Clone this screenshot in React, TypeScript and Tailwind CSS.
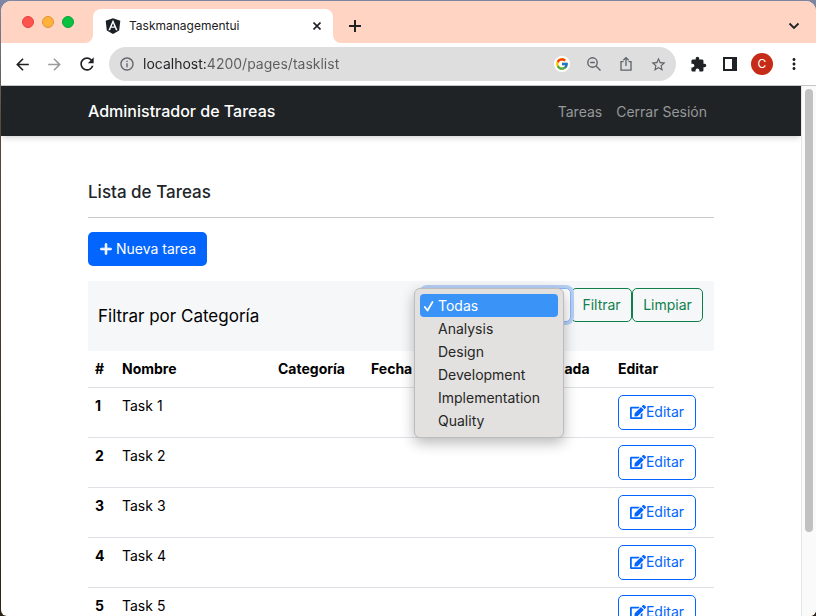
import { useState } from "react";
import { FaAngular, FaEdit } from "react-icons/fa";
import { FaPlus } from "react-icons/fa6";
import { FcGoogle } from "react-icons/fc";
import {
  MdArrowBack,
  MdArrowForward,
  MdExtension,
  MdInfoOutline,
  MdMoreVert,
  MdRefresh,
  MdStarBorder,
} from "react-icons/md";

const categories = ["Todas", "Analysis", "Design", "Development", "Implementation", "Quality"];
const tasks = ["Task 1", "Task 2", "Task 3", "Task 4", "Task 5"];

function TabStrip() {
  return (
    <div className="flex h-[42px] shrink-0 items-end bg-[#ffd4c3] pr-3">
      <div className="flex h-full w-[92px] items-center gap-2 pl-[21px]">
        <button aria-label="Cerrar ventana" className="size-3 rounded-full border border-[#e5403f] bg-[#ff5350]" />
        <button aria-label="Minimizar ventana" className="size-3 rounded-full border border-[#e0942c] bg-[#ffb13c]" />
        <button aria-label="Maximizar ventana" className="size-3 rounded-full border border-[#05a336] bg-[#07c140]" />
      </div>
      <div className="relative flex h-[34px] w-60 items-center rounded-t-lg bg-white pl-[11px] pr-3">
        <svg className="absolute bottom-0 -left-2 size-2 text-white" viewBox="0 0 8 8" aria-hidden="true">
          <path d="M8 0v8H0a8 8 0 0 0 8-8z" fill="currentColor" />
        </svg>
        <svg className="absolute bottom-0 -right-2 size-2 text-white" viewBox="0 0 8 8" aria-hidden="true">
          <path d="M0 0v8h8a8 8 0 0 1-8-8z" fill="currentColor" />
        </svg>
        <FaAngular className="size-[18px] text-[#1b1f26]" />
        <span className="ml-[7px] flex-1 text-xs text-[#202124]">Taskmanagementui</span>
        <button aria-label="Cerrar pestaña" className="text-[#202124]">
          <svg className="size-2" viewBox="0 0 8 8" fill="none" stroke="currentColor" strokeWidth="1.600" aria-hidden="true">
            <path d="M.5.5l7 7M7.500.5l-7 7" />
          </svg>
        </button>
      </div>
      <button aria-label="Nueva pestaña" className="mb-[10px] ml-[15px] text-[#202124]">
        <svg className="size-[14px]" viewBox="0 0 14 14" fill="none" stroke="currentColor" strokeWidth="2" aria-hidden="true">
          <path d="M7 1v12M1 7h12" />
        </svg>
      </button>
      <button aria-label="Buscar pestañas" className="mb-[11px] ml-auto mr-1 text-[#202124]">
        <svg className="size-3" viewBox="0 0 12 12" fill="none" stroke="currentColor" strokeWidth="1.8" aria-hidden="true">
          <path d="M1.5 3.5L6 8l4.500-4.500" />
        </svg>
      </button>
    </div>
  );
}

function Toolbar() {
  const [url, setUrl] = useState("localhost:4200/pages/tasklist");
  return (
    <div className="flex h-[43px] shrink-0 items-center border-b border-[#c4c6c8] bg-white px-3 text-[#202124]">
      <div className="flex w-24 items-center gap-[13px]">
        <button aria-label="Atrás"><MdArrowBack className="size-[19px]" /></button>
        <button aria-label="Adelante" className="text-[#9b9b9b]"><MdArrowForward className="size-[19px]" /></button>
        <button aria-label="Recargar"><MdRefresh className="size-5" /></button>
      </div>
      <div className="flex h-[34px] flex-1 items-center rounded-full bg-[#dedede] pl-[10px] pr-[9px] text-[#5f6368]">
        <MdInfoOutline className="size-4 shrink-0" />
        <input
          aria-label="Dirección"
          value={url}
          onChange={(e) => setUrl(e.target.value)}
          className="ml-2 min-w-0 flex-1 bg-[linear-gradient(90deg,#202124_64px,#5b5c5e_64px)] bg-clip-text text-sm text-transparent outline-none"
        />
        <span className="flex size-4 items-center justify-center rounded-full bg-white">
          <FcGoogle className="size-[14px]" />
        </span>
        <div className="ml-4 flex items-center gap-4">
          <button aria-label="Zoom">
            <svg className="size-4" viewBox="0 0 16 16" fill="none" stroke="currentColor" strokeWidth="1.4" aria-hidden="true">
              <circle cx="6.500" cy="6.500" r="4.700" />
              <path d="M10 10l4.500 4.500M4.200 6.500h4.600" />
            </svg>
          </button>
          <button aria-label="Compartir">
            <svg className="size-4" viewBox="0 0 16 16" fill="none" stroke="currentColor" strokeWidth="1.3" aria-hidden="true">
              <path d="M5.500 5.700H3v8.500h10V5.700h-2.500M8 10V1.800M5.300 4.300L8 1.600l2.700 2.700" />
            </svg>
          </button>
          <button aria-label="Añadir a marcadores"><MdStarBorder className="size-[17px]" /></button>
        </div>
      </div>
      <div className="ml-[14px] flex items-center pr-px">
        <button aria-label="Extensiones"><MdExtension className="size-[17px]" /></button>
        <button aria-label="Panel lateral" className="ml-4">
          <svg className="size-[14px]" viewBox="0 0 14 14" aria-hidden="true">
            <path d="M0 0h14v14H0zM2 2v10h7V2z" fill="currentColor" fillRule="evenodd" />
          </svg>
        </button>
        <button aria-label="Perfil" className="ml-[14px] size-[22px] rounded-full bg-[#c52b17] text-xs text-white">C</button>
        <button aria-label="Menú" className="ml-3"><MdMoreVert className="size-[18px]" /></button>
      </div>
    </div>
  );
}

function Navbar() {
  return (
    <nav className="bg-[#1f2326] shadow-md">
      <div className="mx-auto flex h-[50px] max-w-[626px] items-baseline pt-[13px]">
        <a href="#inicio" className="text-base font-medium text-white">Administrador de Tareas</a>
        <div className="ml-auto flex gap-[14px] pr-[7px] text-sm text-[#969899]">
          <a href="#tareas">Tareas</a>
          <a href="#salir">Cerrar Sesión</a>
        </div>
      </div>
    </nav>
  );
}

function CategorySelect() {
  const [selected, setSelected] = useState("Todas");
  return (
    <div className="relative w-[149px]">
      <select
        id="categoria"
        value={selected}
        onChange={(e) => setSelected(e.target.value)}
        className="h-[34px] w-full appearance-none rounded-[5px] border border-[#86b7fe] bg-white pl-[15px] text-sm outline-none ring-3 ring-[#b5cff5]"
      >
        {categories.map((c) => (
          <option key={c}>{c}</option>
        ))}
      </select>
      <ul
        role="listbox"
        aria-label="Categorías"
        className="absolute top-0 -left-2 z-10 w-[150px] rounded-md border border-[#bcbcbc] bg-[#e2e1df] p-[5px] text-sm text-[#262626] shadow-[0_5px_14px_rgba(0,0,0,0.28)]"
      >
        {categories.map((c) => (
          <li
            key={c}
            role="option"
            aria-selected={c === selected}
            onClick={() => setSelected(c)}
            className="flex h-[23px] items-center rounded-sm pl-[3px] aria-selected:bg-[#3a94f8] aria-selected:text-white"
          >
            <span className="w-[15px]">
              {c === selected && (
                <svg className="size-3" viewBox="0 0 12 12" fill="none" stroke="currentColor" strokeWidth="1.700" strokeLinecap="round" strokeLinejoin="round" aria-hidden="true">
                  <path d="M1.800 7l2.700 3.500L9.500 2" />
                </svg>
              )}
            </span>
            {c}
          </li>
        ))}
      </ul>
    </div>
  );
}

function FilterBar() {
  return (
    <form className="flex h-[70px] items-start bg-[#f6f7f9] pt-[7px] pr-[11px] pl-[10px]" onSubmit={(e) => e.preventDefault()}>
      <label htmlFor="categoria" className="mr-auto pt-4 text-[17px] leading-6 text-black">Filtrar por Categoría</label>
      <CategorySelect />
      <button className="h-[34px] w-[61px] rounded-[5px] border border-[#107f4c] text-sm text-[#107f4c]">Filtrar</button>
      <button type="button" className="h-[34px] w-[71px] rounded-[5px] border border-[#107f4c] text-sm text-[#107f4c]">Limpiar</button>
    </form>
  );
}

function TaskTable() {
  return (
    <table className="w-full table-fixed text-left text-sm text-black">
      <thead>
        <tr className="h-9 border-b border-[#dee2e6]">
          <th className="w-[27px] px-[7px]">#</th>
          <th className="w-[156px] px-[7px]">Nombre</th>
          <th className="w-[93px] px-[7px]">Categoría</th>
          <th className="px-[7px]">Fecha</th>
          <th className="w-[98px] px-[7px]">Finalizada</th>
          <th className="w-[103px] px-[7px]">Editar</th>
        </tr>
      </thead>
      <tbody>
        {tasks.map((task, i) => (
          <tr key={task} className="h-[50px] border-b border-[#dee2e6] align-top">
            <th className="px-[7px] pt-2">{i + 1}</th>
            <td className="px-[7px] pt-2">{task}</td>
            <td />
            <td />
            <td />
            <td className="px-[7px] pt-[7px]">
              <button className="flex h-[35px] w-[78px] items-center justify-center rounded-[5px] border border-[#0265fd] text-sm text-[#0265fd]">
                <FaEdit className="size-4" />
                Editar
              </button>
            </td>
          </tr>
        ))}
      </tbody>
    </table>
  );
}

export default function App() {
  return (
    <div className="h-screen overflow-hidden bg-linear-to-b from-[#7f86a3] via-[#5a4a38] via-20% to-[#2b2215] pt-px pl-px font-['Inter','Liberation_Sans',sans-serif]">
      <div className="flex h-full flex-col overflow-hidden rounded-t-[10px] rounded-b-[6px] bg-white">
        <TabStrip />
        <Toolbar />
        <div className="flex min-h-0 flex-1">
          <div className="flex-1 overflow-hidden">
            <Navbar />
            <main className="mx-auto max-w-[626px] pt-11">
              <h1 className="border-b border-[#c7c8c9] pb-3 text-[17px] leading-[25px] font-medium text-[#212529]">Lista de Tareas</h1>
              <button className="mt-[14px] mb-[15px] flex h-[34px] items-center gap-[3px] rounded-[5px] bg-[#0265fd] px-[11px] text-sm text-white">
                <FaPlus className="size-[14px] stroke-current stroke-[28px]" />
                Nueva tarea
              </button>
              <FilterBar />
              <TaskTable />
            </main>
          </div>
          <div className="w-[15px] border-l border-[#e5e5e5] bg-[#fafafa] pt-[3px] pl-[3px]">
            <div className="h-[84%] w-2 rounded-full bg-[#c1c1c1]" />
          </div>
        </div>
      </div>
    </div>
  );
}
